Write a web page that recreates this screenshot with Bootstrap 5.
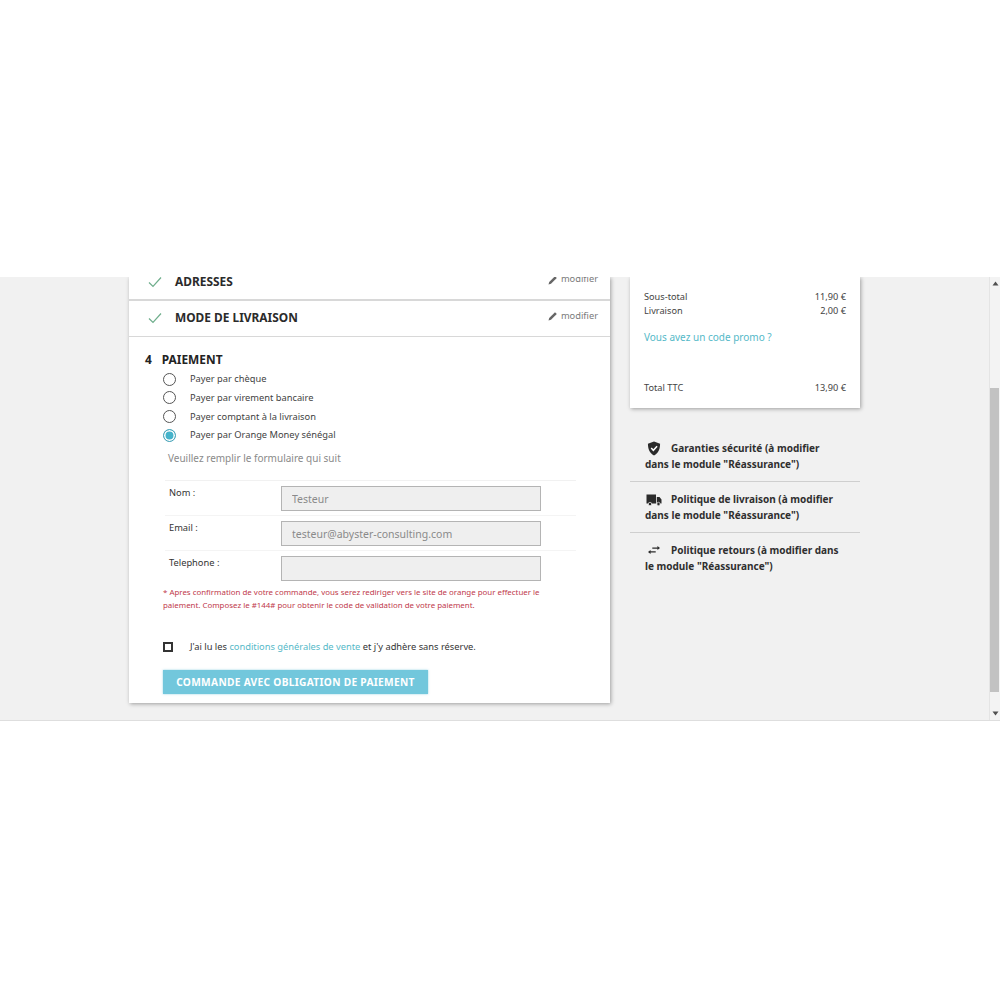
<!DOCTYPE html>
<html lang="fr">
<head>
    <meta charset="UTF-8">
    <title>Paiement</title>
    <link rel="stylesheet" href="https://cdn.jsdelivr.net/npm/bootstrap@5.3.0/dist/css/bootstrap.min.css">
    <style>
        body { background: #fff; font-family: "Noto Sans", sans-serif; color: #3a3a3a; }
        .shot-area { margin-top: 277px; height: 444px; background: #f1f1f1; border-bottom: 1px solid #dedede; overflow: hidden; }
        .page-wrap { padding-left: 129px; }
        .left-box { width: 481px; height: 426px; background: #fff; box-shadow: 1px 1px 4px rgba(0,0,0,.35); }
        .right-col { width: 230px; margin-left: 20px; }
        .step-row { padding-left: 19px; padding-right: 12px; border-bottom: 1px solid #d8d8d8; }
        .step-row.first { height: 24px; border-bottom-width: 2px; align-items: flex-start; }
        .step-row.second { height: 36px; padding-bottom: 1px; }
        .step-title { font-size: 11.9px; font-weight: 700; color: #2b2b2b; margin-left: 13px; }
        .first .step-title { margin-top: -5px; line-height: 18px; }
        .first .tick { margin-top: -1px; }
        .second .tick { margin-top: 1px; }
        .mod-link { font-size: 9.3px; color: #7a7a7a; }
        .first .mod-link { margin-top: -5px; line-height: 14px; }
        .second .mod-link { margin-top: -5px; }
        .pay-head { font-size: 11.9px; font-weight: 700; color: #232323; padding: 14px 0 0 16px; line-height: 16px; }
        .pay-head span { margin-right: 10px; }
        .pay-list { padding-left: 34px; margin-top: 3px; }
        .pay-item { height: 18.6px; font-size: 9.3px; color: #3f3f3f; }
        .pay-item .form-check-input { width: 13px; height: 13px; margin: 0 14px 0 0; border: 1px solid #555; flex: none; }
        .pay-item .form-check-input:checked { background-color: #45b3cb; border-color: #4aa3b8; background-image: none; box-shadow: inset 0 0 0 1.5px #fff; }
        .fill-note { font-size: 10px; color: #8a8a8a; padding-left: 39px; margin-top: 7px; line-height: 14px; }
        .form-zone { margin: 15px 34px 0 36px; border-top: 1px solid #f1f1f1; }
        .field-row { height: 35px; padding-top: 5px; border-bottom: 1px solid #f4f4f4; }
        .field-row:last-child { border-bottom: 0; }
        .field-row label { width: 116px; padding-left: 4px; font-size: 9.3px; color: #333; line-height: 13px; }
        .form-control.field-box { width: 260px; height: 25px; min-height: 0; padding: 0 10px; font-size: 10.5px; color: #8a8a8a; background: #efefef; border: 1px solid #b4b4b4; border-radius: 0; opacity: 1; }
        .red-note { margin: 0 60px 0 34px; font-size: 7.9px; line-height: 13px; color: #c0394b; }
        .cgv-row { margin: 28px 0 0 34px; font-size: 9.3px; color: #333; }
        .cgv-box { width: 10px; height: 10px; border: 2px solid #333; margin-right: 17px; flex: none; }
        .teal-link { color: #55b9c8; text-decoration: none; }
        .btn.pay-btn { margin: 16px 0 0 34px; width: 265px; height: 24px; padding: 0; font-size: 10.2px; font-weight: 700; letter-spacing: .3px; color: #fff; background: #72c7dc; border: 0; border-radius: 0; box-shadow: 0 0 2px rgba(80,180,210,.6); opacity: 1; }
        .sum-box { height: 131px; background: #fff; box-shadow: 1px 1px 4px rgba(0,0,0,.35); padding: 13px 14px 0; font-size: 9.2px; line-height: 14px; color: #444; }
        .sum-promo { font-size: 10px; margin-top: 12px; }
        .sum-total { margin-top: 37px; }
        .assure-row { font-size: 10px; font-weight: 700; color: #2f2f2f; line-height: 15.5px; padding: 10px 18px 9px 15px; border-bottom: 1px solid #cfcfcf; }
        .assure-row.top-one { margin-top: 33px; padding-top: 0; }
        .assure-row:last-child { border-bottom: 0; }
        .assure-icon { float: left; width: 26px; height: 15px; }
        .assure-icon svg { display: block; }
        .icon-shield { margin: 0 0 0 2px; }
        .icon-truck { margin: 2px 0 0 1px; }
        .icon-swap { margin: 2px 0 0 3px; }
        .bar-col { width: 11px; background: #f3f3f3; border-left: 1px solid #e4e4e4; }
        .bar-thumb { height: 304px; background: #c2c2c2; margin-right: 1px; flex: none; }
        .bar-arrow { height: 9px; flex: none; }
        .bar-arrow svg { display: block; margin: 0 auto; }
        .bar-gap-top { height: 98px; flex: none; }
        .bar-gap-bottom { height: 19px; flex: none; }
    </style>
</head>
<body>
<div class="shot-area d-flex">
    <div class="page-wrap flex-grow-1 d-flex align-items-start">
        <div class="left-box">
            <div class="step-row first d-flex justify-content-between">
                <div class="d-flex">
                    <svg class="tick" width="14" height="12" viewBox="0 0 14 12"><path d="M1 6.5 5 10.5 13 1.5" fill="none" stroke="#6fae8c" stroke-width="1.2"/></svg>
                    <span class="step-title">ADRESSES</span>
                </div>
                <span class="mod-link"><svg width="10" height="10" viewBox="0 0 10 10"><path d="M0.5 9.5 1.2 7 7 1.2 8.8 3 3 8.8Z" fill="#666"/></svg> modifier</span>
            </div>
            <div class="step-row second d-flex justify-content-between align-items-center">
                <div class="d-flex align-items-center">
                    <svg class="tick" width="14" height="12" viewBox="0 0 14 12"><path d="M1 6.5 5 10.5 13 1.5" fill="none" stroke="#6fae8c" stroke-width="1.2"/></svg>
                    <span class="step-title">MODE DE LIVRAISON</span>
                </div>
                <span class="mod-link"><svg width="10" height="10" viewBox="0 0 10 10"><path d="M0.5 9.5 1.2 7 7 1.2 8.8 3 3 8.8Z" fill="#666"/></svg> modifier</span>
            </div>
            <div class="pay-head"><span>4</span>PAIEMENT</div>
            <div class="pay-list">
                <div class="pay-item d-flex align-items-center"><input class="form-check-input" type="radio" name="pay"><label>Payer par chèque</label></div>
                <div class="pay-item d-flex align-items-center"><input class="form-check-input" type="radio" name="pay"><label>Payer par virement bancaire</label></div>
                <div class="pay-item d-flex align-items-center"><input class="form-check-input" type="radio" name="pay"><label>Payer comptant à la livraison</label></div>
                <div class="pay-item d-flex align-items-center"><input class="form-check-input" type="radio" name="pay" checked><label>Payer par Orange Money sénégal</label></div>
            </div>
            <div class="fill-note">Veuillez remplir le formulaire qui suit</div>
            <div class="form-zone">
                <div class="field-row d-flex"><label>Nom :</label><input class="form-control field-box" value="Testeur" disabled></div>
                <div class="field-row d-flex"><label>Email :</label><input class="form-control field-box" value="testeur@abyster-consulting.com" disabled></div>
                <div class="field-row d-flex"><label>Telephone :</label><input class="form-control field-box" disabled></div>
            </div>
            <div class="red-note">* Apres confirmation de votre commande, vous serez rediriger vers le site de orange pour effectuer le paiement. Composez le #144# pour obtenir le code de validation de votre paiement.</div>
            <div class="cgv-row d-flex align-items-center"><span class="cgv-box"></span><span>J'ai lu les <a href="#" class="teal-link">conditions générales de vente</a> et j'y adhère sans réserve.</span></div>
            <button class="btn pay-btn" type="button">COMMANDE AVEC OBLIGATION DE PAIEMENT</button>
        </div>
        <div class="right-col">
            <div class="sum-box">
                <div class="d-flex justify-content-between"><span>Sous-total</span><span>11,90 €</span></div>
                <div class="d-flex justify-content-between"><span>Livraison</span><span>2,00 €</span></div>
                <div class="sum-promo"><a href="#" class="teal-link">Vous avez un code promo ?</a></div>
                <div class="sum-total d-flex justify-content-between"><span>Total TTC</span><span>13,90 €</span></div>
            </div>
            <div class="assure-row top-one">
                <span class="assure-icon"><svg class="icon-shield" width="14" height="15" viewBox="0 0 15 16"><path d="M7.5 0.5 14 2.8C14 8 12.5 12.8 7.5 15.5 2.5 12.8 1 8 1 2.8Z" fill="#2b2b2b"/><path d="M4.5 7.5 6.8 10 10.8 5.5" fill="none" stroke="#fff" stroke-width="1.6"/></svg></span>Garanties sécurité (à modifier dans le module "Réassurance")
            </div>
            <div class="assure-row">
                <span class="assure-icon"><svg class="icon-truck" width="16" height="12" viewBox="0 0 16 12"><path d="M0.5 0.5H10V9.5H0.5ZM10.8 3H13.5L15.5 5.5V9.5H10.8Z" fill="#2b2b2b"/><circle cx="4" cy="10" r="1.7" fill="#2b2b2b" stroke="#f1f1f1" stroke-width=".7"/><circle cx="12.5" cy="10" r="1.7" fill="#2b2b2b" stroke="#f1f1f1" stroke-width=".7"/></svg></span>Politique de livraison (à modifier dans le module "Réassurance")
            </div>
            <div class="assure-row">
                <span class="assure-icon"><svg class="icon-swap" width="12" height="10" viewBox="0 0 14 10"><path d="M5 2H11V0.3L14 2.8 11 5V3.6H5ZM9 6.4H3V5L0 7.2 3 9.7V8H9Z" fill="#2b2b2b"/></svg></span>Politique retours (à modifier dans le module "Réassurance")
            </div>
        </div>
    </div>
    <div class="bar-col d-flex flex-column">
        <div class="bar-arrow mt-1"><svg width="7" height="5" viewBox="0 0 7 5"><path d="M3.5 0.5 6.5 4.5H0.5Z" fill="#505050"/></svg></div>
        <div class="bar-gap-top"></div>
        <div class="bar-thumb"></div>
        <div class="bar-gap-bottom"></div>
        <div class="bar-arrow"><svg width="7" height="5" viewBox="0 0 7 5"><path d="M3.5 4.5 6.5 0.5H0.5Z" fill="#505050"/></svg></div>
    </div>
</div>
<script src="https://cdn.jsdelivr.net/npm/bootstrap@5.3.0/dist/js/bootstrap.bundle.min.js"></script>
</body>
</html>
